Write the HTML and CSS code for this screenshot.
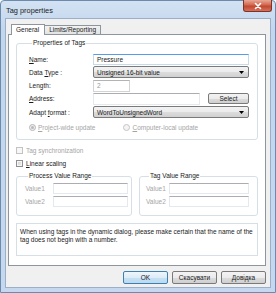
FILE: index.html
```html
<!DOCTYPE html>
<html>
<head>
<meta charset="utf-8">
<link rel="stylesheet" href="styles.css">
</head>
<body>
<div class="window">
  <div class="titlebar">
    <span class="title">Tag properties</span>
    <div class="close">
      <svg width="10" height="8" viewBox="0 0 10 8"><path d="M2.5 1.5 L7.5 6.5 M7.5 1.5 L2.5 6.5" stroke="#fff" stroke-width="1.6" stroke-linecap="round"/></svg>
    </div>
  </div>
  <div class="client">
    <div class="tabs">
      <div class="tab active">General</div>
      <div class="tab">Limits/Reporting</div>
    </div>
    <div class="panel">
      <fieldset class="group props">
        <legend>Properties of Tags</legend>
        <div class="row r-name"><span class="lbl"><u>N</u>ame:</span><div class="field input focus">Pressure</div></div>
        <div class="row"><span class="lbl">Data <u>T</u>ype :</span><div class="field combo"><span>Unsigned 16-bit value</span><svg class="arrow" width="5" height="3" viewBox="0 0 5 3"><path d="M0 0H5L2.5 3Z" fill="#000"/></svg></div></div>
        <div class="row"><span class="lbl">Length:</span><div class="field input disabled short">2</div></div>
        <div class="row"><span class="lbl"><u>A</u>ddress:</span><div class="field input addr"></div><div class="btn select">Select</div></div>
        <div class="row"><span class="lbl">Adapt <u>f</u>ormat :</span><div class="field combo"><span>WordToUnsignedWord</span><svg class="arrow" width="5" height="3" viewBox="0 0 5 3"><path d="M0 0H5L2.5 3Z" fill="#000"/></svg></div></div>
        <div class="radios">
          <div class="radio"><svg width="7" height="7" viewBox="0 0 7 7"><circle cx="3.5" cy="3.5" r="3" fill="#eeeeee" stroke="#b7b7b7"/><circle cx="3.5" cy="3.5" r="1.5" fill="#b9b9b9"/></svg><span><u>P</u>roject-wide update</span></div>
          <div class="radio r2"><svg width="7" height="7" viewBox="0 0 7 7"><circle cx="3.5" cy="3.5" r="3" fill="#f4f4f4" stroke="#c4c4c4"/></svg><span><u>C</u>omputer-local update</span></div>
        </div>
      </fieldset>
      <div class="check disabled"><span class="box"></span><span>Tag synchronization</span></div>
      <div class="check second"><span class="box on"></span><span><u>L</u>inear scaling</span></div>
      <div class="ranges">
        <fieldset class="group range left">
          <legend>Process Value Range</legend>
          <div class="vrow"><span class="vlbl">Value1</span><div class="field input"></div></div>
          <div class="vrow"><span class="vlbl">Value2</span><div class="field input"></div></div>
        </fieldset>
        <fieldset class="group range right">
          <legend>Tag Value Range</legend>
          <div class="vrow"><span class="vlbl">Value1</span><div class="field input"></div></div>
          <div class="vrow"><span class="vlbl">Value2</span><div class="field input"></div></div>
        </fieldset>
      </div>
      <div class="note">When using tags in the dynamic dialog, please make certain that the name of the tag does not begin with a number.</div>
    </div>
    <div class="buttons">
      <div class="btn dlg default">OK</div>
      <div class="btn dlg">Скасувати</div>
      <div class="btn dlg">Довідка</div>
    </div>
  </div>
</div>
</body>
</html>
```

FILE: styles.css
```css
* { box-sizing: border-box; }
html, body { margin: 0; padding: 0; }
body {
  width: 276px;
  height: 293px;
  background: #ffffff;
  font-family: "Liberation Sans", Arial, sans-serif;
  font-size: 6.5px;
  color: #1a1a1a;
  overflow: hidden;
}
u { text-decoration: underline; text-underline-offset: 1px; }

.window {
  width: 276px;
  height: 293px;
  border: 1px solid #6c8aab;
  border-radius: 4px 4px 0 0;
  background: linear-gradient(#d3e2f3, #c2d6ee 30px, #c5d8ef);
  display: flex;
  flex-direction: column;
}
.titlebar {
  height: 17px;
  flex: none;
  display: flex;
  align-items: flex-start;
  justify-content: space-between;
}
.title {
  font-size: 7.4px;
  color: #1b1b1b;
  margin: 5px 0 0 5px;
}
.close {
  width: 29px;
  height: 12px;
  margin: -1px 3px 0 0;
  border: 1px solid #7a3428;
  border-top: none;
  border-radius: 0 0 3px 3px;
  background: linear-gradient(#e8a796, #d2684f 45%, #c3472f 55%, #d5705a);
  display: flex;
  align-items: center;
  justify-content: center;
}
.client {
  flex: none;
  height: 270px;
  margin: 0 4px 0 4px;
  border: 1px solid #9bb0c8;
  background: #f0f0f0;
  display: flex;
  flex-direction: column;
}

.tabs {
  display: flex;
  margin: 4px 0 0 5px;
  height: 11px;
  align-items: flex-end;
  position: relative;
  z-index: 1;
}
.tab {
  height: 9px;
  padding: 0 4px;
  border: 1px solid #8d959e;
  border-bottom: none;
  background: linear-gradient(#f2f2f2, #e3e3e3);
  line-height: 8px;
  margin-right: -1px;
}
.tab.active {
  height: 11px;
  background: #ffffff;
  line-height: 10px;
  margin-bottom: -1px;
  padding: 0 5px 0 4px;
}
.panel {
  margin: 0 4px 0 2px;
  height: 232px;
  border: 1px solid #8d959e;
  background: #ffffff;
  padding: 4px 7px 0 7px;
  display: flex;
  flex-direction: column;
}

.group {
  margin: 0;
  border: 1px solid #d5dfe5;
  border-radius: 3px;
  min-width: 0;
}
.group legend {
  padding: 0 1px;
  margin-left: 3px;
  line-height: 8px;
  color: #1a1a1a;
}
.props {
  padding: 6px 8px 0 12px;
  height: 101px;
}
.row {
  display: flex;
  align-items: center;
  height: 12px;
  margin-bottom: 1.3px;
}
.lbl { width: 64px; flex: none; }
.field {
  height: 12px;
  flex: 1;
  display: flex;
  align-items: center;
  padding-left: 3px;
}
.input {
  background: #ffffff;
  border: 1px solid #e3e9ef;
  border-top-color: #abadb3;
}
.input.focus {
  border-color: #c5daed;
  border-top-color: #569de5;
  height: 11px;
}
.input.disabled { color: #9a9a9a; border-color: #d3d3d3; border-top-color: #b3b3b3; }
.input.short { flex: none; width: 37px; }
.input.addr { flex: none; width: 107px; }
.combo {
  border: 1px solid #7a7a7a;
  border-radius: 2px;
  background: linear-gradient(#f3f3f3, #ebebeb 50%, #dddddd 50%, #d0d0d0);
  justify-content: space-between;
  padding-right: 4px;
}
.arrow { flex: none; }
.btn {
  height: 12px;
  border: 1px solid #7a7a7a;
  border-radius: 2px;
  background: linear-gradient(#f3f3f3, #ebebeb 50%, #dddddd 50%, #cfcfcf);
  display: flex;
  align-items: center;
  justify-content: center;
}
.select { width: 41px; margin-left: 8px; flex: none; height: 11px; }

.radios {
  display: flex;
  align-items: center;
  height: 10px;
  margin-top: 4px;
  color: #a5a5a5;
}
.radio { display: flex; align-items: center; gap: 2px; }
.radio svg { flex: none; }
.radio.r2 { margin-left: 28px; }

.check {
  display: flex;
  align-items: center;
  gap: 3px;
  height: 8px;
  margin-top: 6px;
}
.check.second { margin-top: 5px; }
.check.disabled { color: #a5a5a5; }
.box {
  width: 7px;
  height: 7px;
  border: 1px solid #c3c3c3;
  background: #f7f7f7;
  flex: none;
}
.box.on {
  border-color: #8e8f8f;
  background: linear-gradient(135deg, #cfcfcf, #f2f2f2);
  box-shadow: inset 0 0 0 1px #f6f6f6;
}

.ranges {
  display: flex;
  gap: 7px;
  margin-top: 5px;
}
.range {
  flex: 1;
  height: 44px;
  padding: 3px 3px 0 8px;
}
.range.right { padding: 3px 8px 0 6px; }
.vrow {
  display: flex;
  align-items: center;
  height: 11px;
  margin-bottom: 2px;
}
.vlbl { width: 28px; flex: none; color: #a5a5a5; }
.right .vlbl { width: 23px; }
.vrow .field { height: 11px; }

.note {
  margin-top: 7px;
  height: 33px;
  border: 1px solid #d5dfe5;
  background: #ffffff;
  padding: 4px 3px 0 3px;
  line-height: 7.5px;
}

.buttons {
  display: flex;
  justify-content: flex-end;
  gap: 4px;
  margin: 5px 4px 0 0;
}
.dlg { width: 45px; height: 13px; }
.dlg.default {
  border-color: #3c7fb1;
  background: linear-gradient(#eef6fb, #dcecf8 50%, #c6e0f3 50%, #bcdaf0);
}
```
